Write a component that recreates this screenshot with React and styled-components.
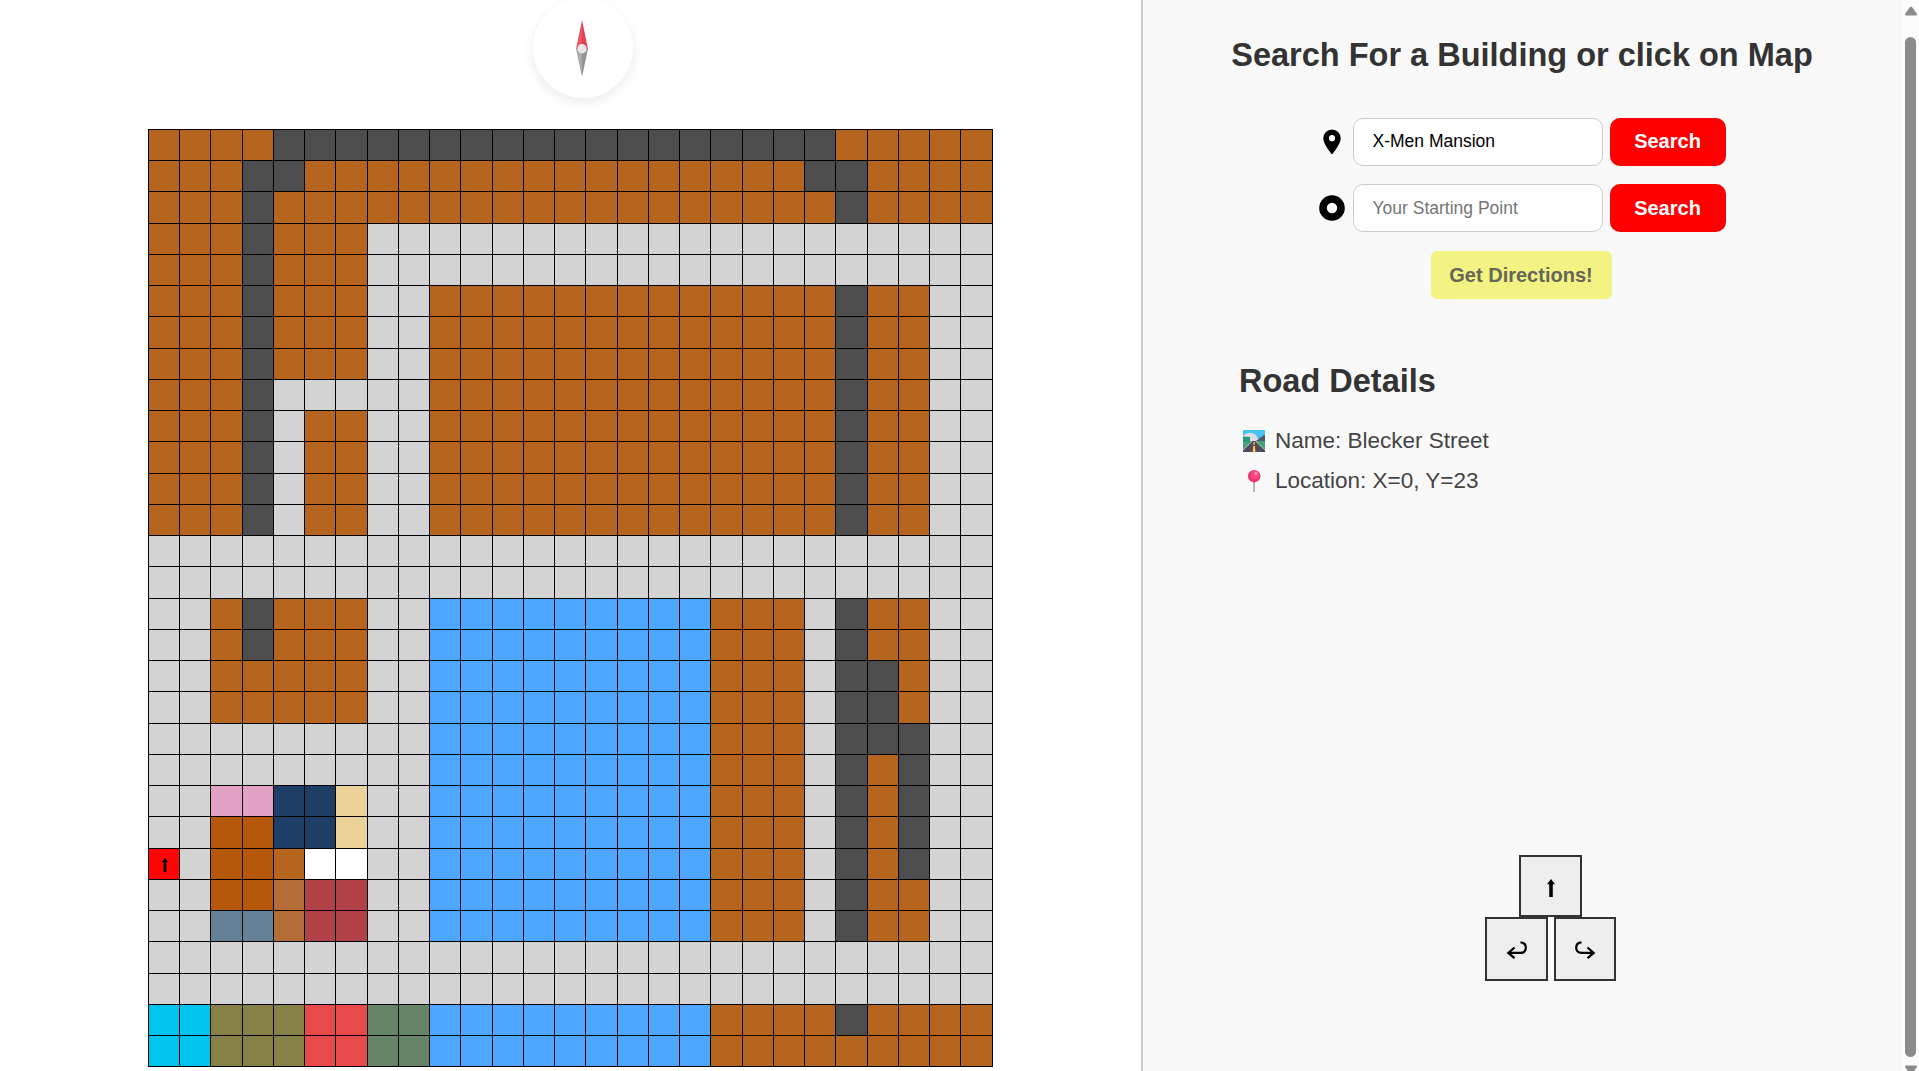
import React from 'react';
import styled, { createGlobalStyle } from 'styled-components';

const GlobalStyle = createGlobalStyle`
  * { box-sizing: border-box; }
  html, body { margin: 0; height: 100%; overflow: hidden; background: #fff; }
  body, input, button { font-family: "Liberation Sans", Arial, sans-serif; }
  h1, h2 { margin: 0; }
`;

const colors = {
  B: '#b5651d', D: '#4d4d4d', '.': '#d3d3d3', W: '#4da6ff',
  P: '#e3a1c5', N: '#1f3e66', T: '#ebd299', O: '#b5580c',
  X: '#ffffff', S: '#b56d38', M: '#b04147', K: '#648196',
  C: '#00c3ee', L: '#868147', R: '#e74a48', F: '#668568', U: '#ff0505',
};

const rows = [
  'BBBBDDDDDDDDDDDDDDDDDDBBBBB',
  'BBBDDBBBBBBBBBBBBBBBBDDBBBB',
  'BBBDBBBBBBBBBBBBBBBBBBDBBBB',
  'BBBDBBB....................',
  'BBBDBBB....................',
  'BBBDBBB..BBBBBBBBBBBBBDBB..',
  'BBBDBBB..BBBBBBBBBBBBBDBB..',
  'BBBDBBB..BBBBBBBBBBBBBDBB..',
  'BBBD.....BBBBBBBBBBBBBDBB..',
  'BBBD.BB..BBBBBBBBBBBBBDBB..',
  'BBBD.BB..BBBBBBBBBBBBBDBB..',
  'BBBD.BB..BBBBBBBBBBBBBDBB..',
  'BBBD.BB..BBBBBBBBBBBBBDBB..',
  '...........................',
  '...........................',
  '..BDBBB..WWWWWWWWWBBB.DBB..',
  '..BDBBB..WWWWWWWWWBBB.DBB..',
  '..BBBBB..WWWWWWWWWBBB.DDB..',
  '..BBBBB..WWWWWWWWWBBB.DDB..',
  '.........WWWWWWWWWBBB.DDD..',
  '.........WWWWWWWWWBBB.DBD..',
  '..PPNNT..WWWWWWWWWBBB.DBD..',
  '..OONNT..WWWWWWWWWBBB.DBD..',
  'U.OOBXX..WWWWWWWWWBBB.DBD..',
  '..OOSMM..WWWWWWWWWBBB.DBB..',
  '..KKSMM..WWWWWWWWWBBB.DBB..',
  '...........................',
  '...........................',
  'CCLLLRRFFWWWWWWWWWBBBBDBBBB',
  'CCLLLRRFFWWWWWWWWWBBBBBBBBB',
];

const Page = styled.div`
  display: flex;
  height: 1071px;
  overflow: hidden;
`;
const MapPane = styled.main`
  flex: 1;
  display: flex;
  flex-direction: column;
  align-items: center;
  min-width: 0;
`;
const CompassDial = styled.div`
  flex: none;
  display: flex;
  justify-content: center;
  align-items: center;
  width: 100px;
  height: 100px;
  margin: -2px 0 31px 25px;
  padding: 2px 3px 0 0;
  border-radius: 50%;
  background: #fff;
  box-shadow: 0 4px 12px rgba(0, 0, 0, 0.08);
`;
const Board = styled.div`
  flex: none;
  display: grid;
  grid-template-columns: repeat(6, 31px 31px 32px 31px) 31px 31px 32px;
  grid-template-rows: repeat(7, 31px 31px 32px 31px) 31px 31px;
  border: solid #000;
  border-width: 1px 0 0 1px;
`;
const Cell = styled.div`
  display: flex;
  align-items: center;
  justify-content: center;
  border: solid #000;
  border-width: 0 1px 1px 0;
  background: ${(p) => colors[p.$kind]};
  svg { margin: 2px 0 0 1px; }
`;

const Panel = styled.aside`
  width: 760px;
  display: flex;
  flex-direction: column;
  background: #f9f9f9;
  border-left: 2px solid #ccc;
`;
const Title = styled.h1`
  margin-top: 36px;
  text-align: center;
  font-size: 32.5px;
  line-height: 38px;
  color: #333;
`;
const Form = styled.form`
  display: flex;
  flex-direction: column;
  align-items: center;
  margin: 44px 2px 0 0;
`;
const SearchRow = styled.div`
  display: flex;
  align-items: center;
  gap: 7px;
  height: 48px;
  margin: 0 0 ${(p) => (p.$last ? 19 : 18)}px 2px;
`;
const Marker = styled.span`
  width: 27px;
  height: 30px;
  display: flex;
  align-items: center;
  justify-content: center;
`;
const Field = styled.input`
  width: 250px;
  height: 48px;
  padding: 0 18px ${(p) => (p.placeholder ? 0 : 2)}px 19px;
  border: 1px solid #ccc;
  border-radius: 10px;
  background: #fff;
  color: #000;
  font-size: 17.5px;
  outline: none;
  &::placeholder { color: #757575; }
`;
const Button = styled.button`
  width: ${(p) => (p.$wide ? 181 : 116)}px;
  height: 48px;
  padding: ${(p) => (p.$low ? '1px 0 0' : '0 0 1px')};
  border: 0;
  border-radius: ${(p) => (p.$wide ? 6 : 10)}px;
  background: ${(p) => (p.$wide ? '#f3f383' : '#ff0000')};
  color: ${(p) => (p.$wide ? '#666659' : '#fff')};
  font-size: 20px;
  font-weight: bold;
`;
const Details = styled.section`
  margin: 63px 0 0 96px;
`;
const DetailsTitle = styled.h2`
  font-size: 32.5px;
  line-height: 38px;
  color: #333;
  margin-bottom: 21px;
`;
const DetailLine = styled.div`
  display: flex;
  align-items: center;
  gap: 10px;
  height: 40px;
  padding-left: 2px;
  font-size: 22.5px;
  color: #444;
  svg { margin-left: 2px; }
`;
const Controls = styled.div`
  display: grid;
  grid-template-columns: 63px 62px;
  column-gap: 6px;
  margin: 354px 0 0 342px;
`;
const Key = styled.button`
  display: flex;
  align-items: center;
  justify-content: center;
  width: ${(p) => (p.$w || 63)}px;
  height: ${(p) => (p.$first ? 62 : 64)}px;
  padding: ${(p) => (p.$first ? 4 : 2)}px 0 0;
  border: 2px solid #333;
  background: #eee;
  ${(p) => p.$first && 'grid-column: 1 / -1; justify-self: center;'}
`;
const ScrollTrack = styled.div`
  width: 18px;
  display: flex;
  flex-direction: column;
  align-items: center;
  background: #fcfcfc;
  padding: 6px 0 0 1px;
  svg { flex: none; }
`;
const ScrollThumb = styled.div`
  flex: none;
  width: 11px;
  height: 1020px;
  margin: 21px 0 8px;
  border-radius: 6px;
  background: #8b8b8b;
`;

const CompassNeedle = () => (
  <svg width="14" height="58" viewBox="0 0 14 58">
    <path d="M7 0 1 29h6z" fill="#ed5564" />
    <path d="M7 0v29h6z" fill="#da4453" />
    <path d="M1 29h6v28z" fill="#aaa" />
    <path d="M7 57V29h6z" fill="#939393" />
    <circle cx="7" cy="28.7" r="4.7" fill="#e6e6e6" />
  </svg>
);
const UpArrow = ({ width, height }) => (
  <svg width={width} height={height} viewBox="0 0 9 18" preserveAspectRatio="none">
    <path d="M4.5 0 9 5.3H6.5V18h-4V5.3H0z" />
  </svg>
);
const TurnArrow = ({ right }) => (
  <svg width="22" height="18" viewBox="0 0 22 18" fill="none" stroke="#000" strokeWidth="2.2">
    <g transform={right ? 'translate(22 0) scale(-1 1)' : undefined}>
      <path d="M14.5 1.3c3.5.2 5.3 2.2 5.3 5.2 0 3.4-2 5.4-5.5 5.4H2M8.5 6.5 2.3 11.9l6.2 5.2" />
    </g>
  </svg>
);
const PinIcon = () => (
  <svg width="18" height="26" viewBox="0 0 18 26">
    <path fillRule="evenodd" d="M9 .5A8.7 8.7 0 0 0 .3 9.2C.3 15.5 9 25.3 9 25.3s8.7-9.8 8.700-16.1A8.7 8.7 0 0 0 9 .5zm0 5.6a3.1 3.1 0 1 1 0 6.2 3.1 3.1 0 0 1 0-6.2z" />
  </svg>
);
const RingIcon = () => (
  <svg width="26" height="26" viewBox="0 0 26 26">
    <circle cx="13" cy="13" r="9" fill="none" stroke="#000" strokeWidth="7.6" />
  </svg>
);
const RoadIcon = () => (
  <svg width="22" height="22" viewBox="0 0 22 22">
    <rect width="22" height="22" rx="1" fill="#44c4f3" />
    <path d="M0 6c4-4 9-4 13-1l3 6H0z" fill="#dcdce5" />
    <path d="M13 11l8-6 1 .5V13h-9z" fill="#54546a" />
    <path d="M0 11h22v11H0z" fill="#42a278" />
    <path d="M0 6.5 7 7v4.500H0z" fill="#259b78" />
    <path d="M9.5 11h3L22 20v2H0v-2z" fill="#504a5d" />
    <path d="M9.5 11 0 20M12.5 11 22 20" stroke="#c4bdc8" strokeWidth="1" />
    <path d="M10.5 12h1.2v3h-1.2zM10.2 16h1.8l.4 6H9.8z" fill="#ffc83d" />
  </svg>
);
const PushpinIcon = () => (
  <svg width="22" height="22" viewBox="0 0 22 22">
    <path d="M10.3 11h1.500v11h-1.500z" fill="#a69aac" />
    <circle cx="11.2" cy="6.2" r="6.2" fill="#ed3572" />
    <circle cx="12" cy="5" r="4" fill="#ff4a80" />
    <circle cx="13" cy="3.6" r="1.5" fill="#ff9ac2" />
  </svg>
);
const ScrollArrow = ({ down }) => (
  <svg width="12" height="10" viewBox="0 0 12 10">
    <path
      d="M5 1Q6 0 7 1l5 7q0 1.5-1 1.5H1Q0 9.5 0 8z"
      fill="#8b8b8b"
      transform={down ? 'translate(0 10) scale(1 -1)' : undefined}
    />
  </svg>
);

export default function App() {
  return (
    <>
      <GlobalStyle />
      <Page>
        <MapPane>
          <CompassDial><CompassNeedle /></CompassDial>
          <Board>
            {rows.map((row, y) => [...row].map((kind, x) => (
              <Cell key={`${x}-${y}`} $kind={kind}>
                {kind === 'U' && <UpArrow width={6} height={14} />}
              </Cell>
            )))}
          </Board>
        </MapPane>
        <Panel>
          <Title>Search For a Building or click on Map</Title>
          <Form onSubmit={(e) => e.preventDefault()}>
            <SearchRow>
              <Marker><PinIcon /></Marker>
              <Field defaultValue="X-Men Mansion" />
              <Button type="button">Search</Button>
            </SearchRow>
            <SearchRow $last>
              <Marker><RingIcon /></Marker>
              <Field placeholder="Your Starting Point" />
              <Button type="button" $low>Search</Button>
            </SearchRow>
            <Button type="button" $wide $low>Get Directions!</Button>
          </Form>
          <Details>
            <DetailsTitle>Road Details</DetailsTitle>
            <DetailLine><RoadIcon />Name: Blecker Street</DetailLine>
            <DetailLine><PushpinIcon />Location: X=0, Y=23</DetailLine>
          </Details>
          <Controls>
            <Key $first><UpArrow width={8} height={18} /></Key>
            <Key><TurnArrow /></Key>
            <Key $w={62}><TurnArrow right /></Key>
          </Controls>
        </Panel>
        <ScrollTrack>
          <ScrollArrow />
          <ScrollThumb />
          <ScrollArrow down />
        </ScrollTrack>
      </Page>
    </>
  );
}
